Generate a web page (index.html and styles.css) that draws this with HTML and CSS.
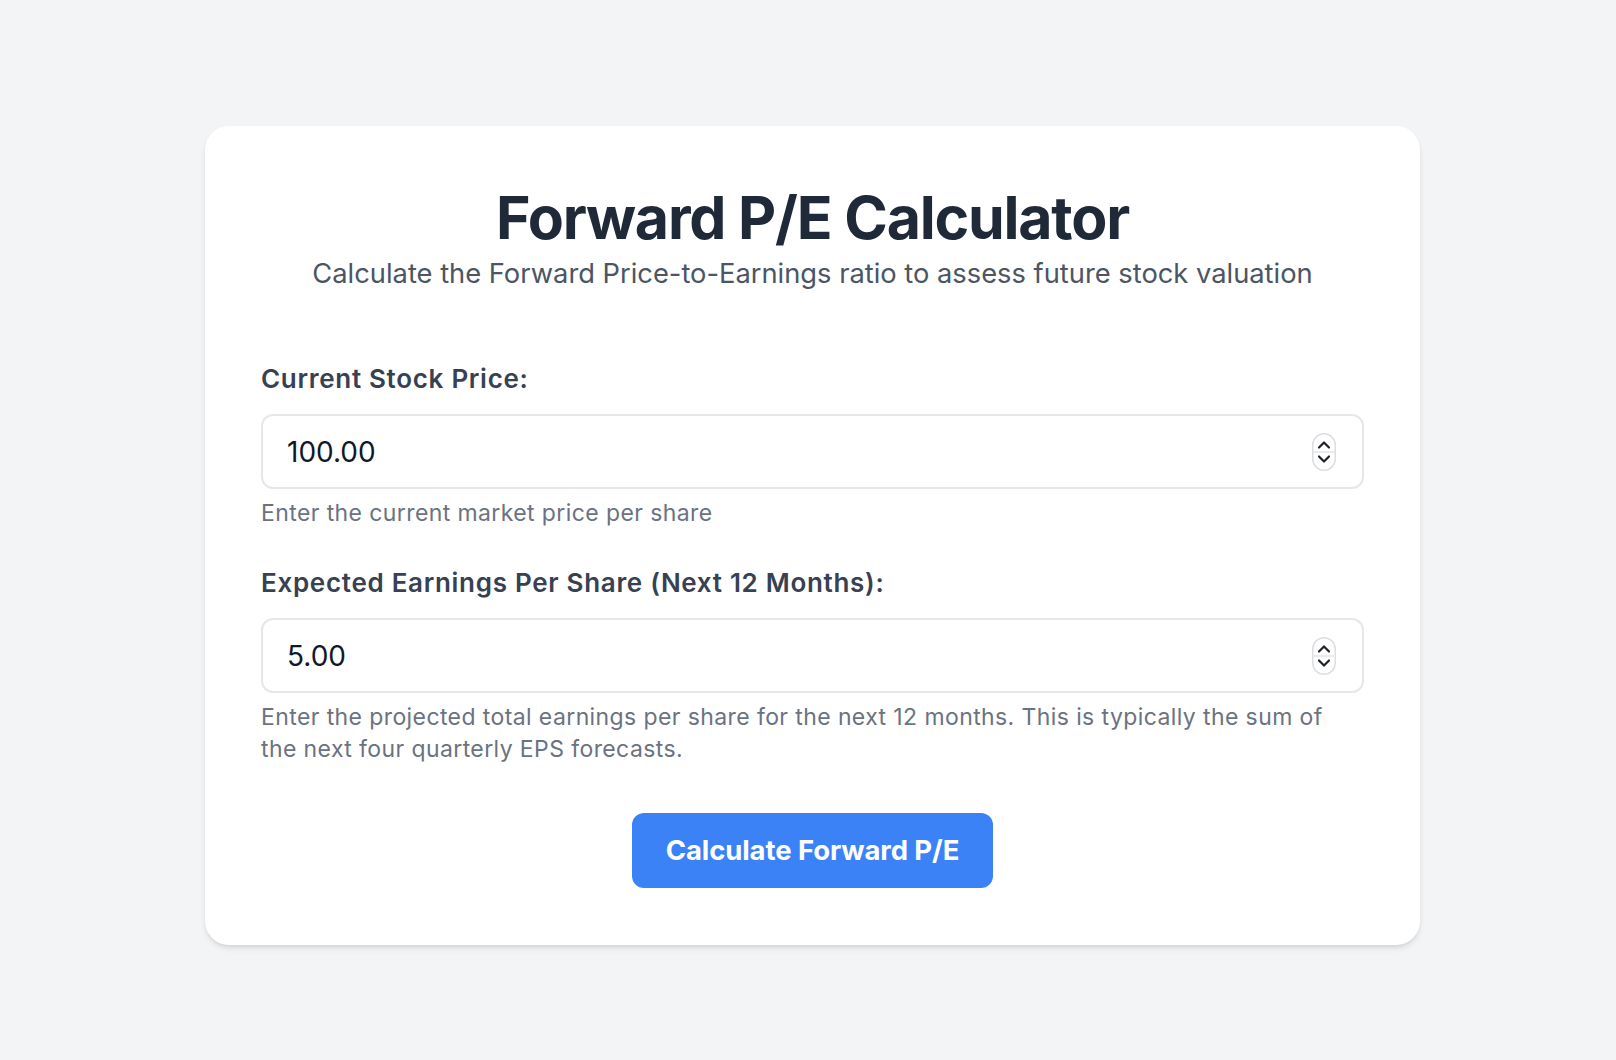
FILE: index.html
```html
<!DOCTYPE html>
<html lang="en">
<head>
<meta charset="utf-8">
<title>Forward P/E Calculator</title>
<link rel="stylesheet" href="styles.css">
</head>
<body>
<main class="card">
  <header class="header">
    <h1 class="title">Forward P/E Calculator</h1>
    <p class="subtitle">Calculate the Forward Price-to-Earnings ratio to assess future stock valuation</p>
  </header>

  <div class="field">
    <label class="label" for="price">Current Stock Price:</label>
    <div class="input-wrap">
      <input class="input" id="price" type="number" value="100.00" step="0.01">
      <svg class="spinner" width="24" height="38" viewBox="0 0 24 38" aria-hidden="true">
        <rect x="0.75" y="0.75" width="22.5" height="36.5" rx="11.25" fill="#fff" stroke="#dcdde0" stroke-width="1.5"/>
        <line x1="1" y1="19" x2="23" y2="19" stroke="#e3e4e7" stroke-width="1.5"/>
        <polyline points="7,14.5 12,9.5 17,14.5" fill="none" stroke="#1f2328" stroke-width="2.2" stroke-linecap="round" stroke-linejoin="round"/>
        <polyline points="7,23.5 12,28.5 17,23.5" fill="none" stroke="#1f2328" stroke-width="2.2" stroke-linecap="round" stroke-linejoin="round"/>
      </svg>
    </div>
    <p class="help">Enter the current market price per share</p>
  </div>

  <div class="field field-last">
    <label class="label" for="eps">Expected Earnings Per Share (Next 12 Months):</label>
    <div class="input-wrap">
      <input class="input" id="eps" type="number" value="5.00" step="0.01">
      <svg class="spinner" width="24" height="38" viewBox="0 0 24 38" aria-hidden="true">
        <rect x="0.75" y="0.75" width="22.5" height="36.5" rx="11.25" fill="#fff" stroke="#dcdde0" stroke-width="1.5"/>
        <line x1="1" y1="19" x2="23" y2="19" stroke="#e3e4e7" stroke-width="1.5"/>
        <polyline points="7,14.5 12,9.5 17,14.5" fill="none" stroke="#1f2328" stroke-width="2.2" stroke-linecap="round" stroke-linejoin="round"/>
        <polyline points="7,23.5 12,28.5 17,23.5" fill="none" stroke="#1f2328" stroke-width="2.2" stroke-linecap="round" stroke-linejoin="round"/>
      </svg>
    </div>
    <p class="help">Enter the projected total earnings per share for the next 12 months. This is typically the sum of the next four quarterly EPS forecasts.</p>
  </div>

  <div class="actions">
    <button class="button" type="button">Calculate Forward P/E</button>
  </div>
</main>
</body>
</html>
```

FILE: styles.css
```css
* {
  box-sizing: border-box;
}

html, body {
  margin: 0;
  padding: 0;
}

body {
  background: #f3f4f6;
  font-family: Inter, "Noto Sans", "Liberation Sans", sans-serif;
  min-height: 1060px;
  padding-top: 126px;
}

.card {
  width: 1215px;
  margin-left: 205px;
  background: #ffffff;
  border-radius: 24px;
  padding: 57.5px 56px 57px;
  box-shadow: 0 4px 6px -1px rgba(0, 0, 0, 0.10), 0 2px 4px -1px rgba(0, 0, 0, 0.06);
}

.header {
  text-align: center;
  margin-bottom: 68px;
}

.title {
  margin: 0;
  font-size: 59px;
  font-weight: 700;
  line-height: 1.15;
  color: #1f2937;
  letter-spacing: -1.2px;
}

.subtitle {
  margin: 3.5px 0 0;
  font-size: 27.3px;
  line-height: 1.4;
  color: #4b5563;
}

.field {
  margin-bottom: 36px;
}

.field-last {
  margin-bottom: 47.5px;
}

.label {
  display: block;
  font-size: 26px;
  font-weight: 560;
  line-height: 36px;
  letter-spacing: 0.7px;
  color: #374151;
  margin-bottom: 17px;
}

.input-wrap {
  position: relative;
}

.input {
  display: block;
  width: 100%;
  height: 75px;
  padding: 0 24px;
  border: 2px solid #e5e7eb;
  border-radius: 12px;
  font-family: inherit;
  font-size: 28px;
  color: #111827;
  background: #fff;
  outline: none;
  -moz-appearance: textfield;
  appearance: textfield;
}

.input::-webkit-outer-spin-button,
.input::-webkit-inner-spin-button {
  -webkit-appearance: none;
  margin: 0;
}

.spinner {
  position: absolute;
  right: 28px;
  top: 18.5px;
}

.help {
  margin: 8px 0 0;
  font-size: 23px;
  line-height: 32px;
  letter-spacing: 0.4px;
  color: #6b7280;
}

.actions {
  display: flex;
  justify-content: center;
}

.button {
  background: #3b82f6;
  color: #ffffff;
  border: none;
  border-radius: 12px;
  padding: 20px 34px;
  font-family: inherit;
  font-size: 27.5px;
  font-weight: 700;
  line-height: 35px;
  letter-spacing: -0.1px;
  cursor: pointer;
}
```
